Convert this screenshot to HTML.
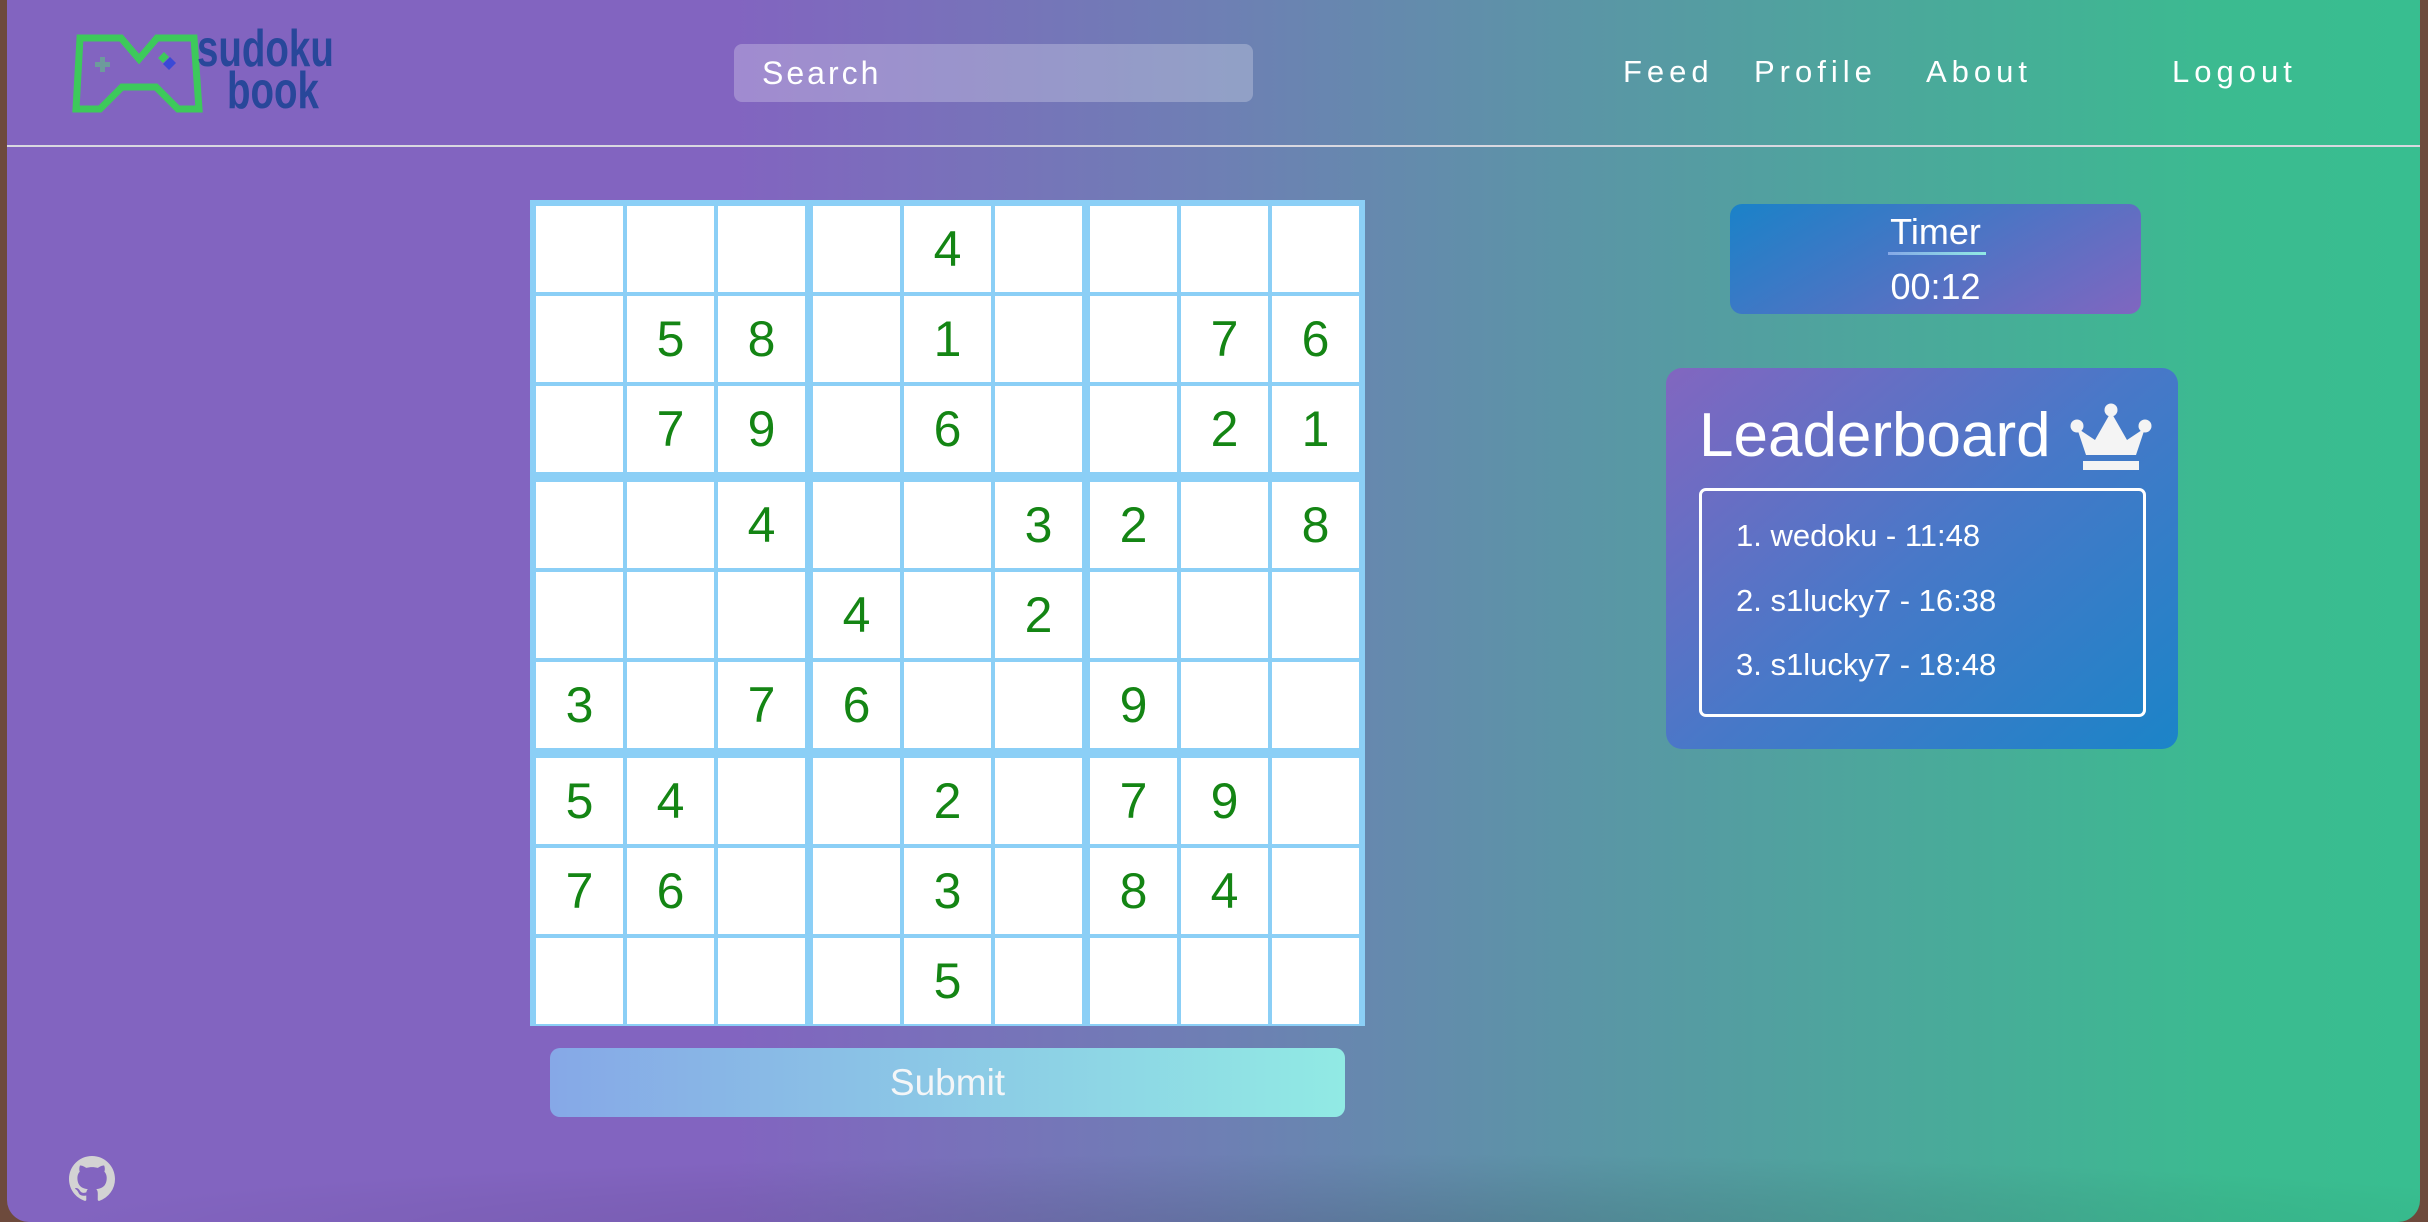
<!DOCTYPE html>
<html><head><meta charset="utf-8"><style>
html,body{margin:0;padding:0;width:2428px;height:1222px;overflow:hidden;background:#6d4a3c;font-family:"Liberation Sans",sans-serif}
#page{position:absolute;left:7px;top:0;width:2413px;height:1222px;border-radius:0 0 22px 22px;overflow:hidden;background:linear-gradient(90deg,#8264c0 0%,#8264c0 30%,#6e7fb4 50%,#5b95a6 65%,#3bbb90 92%,#38be90 100%)}
#shade{position:absolute;left:0;right:0;bottom:0;height:70px;background:radial-gradient(ellipse at 55% 110%,rgba(0,0,0,0.12),rgba(0,0,0,0) 70%)}
#hline{position:absolute;left:0;top:145px;width:100%;height:2px;background:#d8d8e0}
#search{position:absolute;left:727px;top:44px;width:519px;height:58px;border-radius:8px;background:rgba(255,255,255,0.25);color:#fff;font-size:32px;letter-spacing:3px;line-height:58px;padding-left:28px;box-sizing:border-box;font-weight:300}
.nav{position:absolute;top:52px;color:#fff;font-size:31px;letter-spacing:5px;line-height:40px}
#grid{position:absolute;left:523px;top:200px;width:835px;height:826px;background:#8bcff6;padding:6px;box-sizing:border-box;display:grid;grid-template-columns:87px 87px 91px 87px 87px 91px 87px 87px 87px;grid-template-rows:86px 86px 92px 86px 86px 92px 86px 86px 86px;column-gap:4px;row-gap:4px}
.c{background:#fff;width:87px;height:86px;color:#148514;font-size:50px;text-align:center;line-height:86px}
#submit{position:absolute;left:543px;top:1048px;width:795px;height:69px;border-radius:10px;background:linear-gradient(90deg,#86a8e7,#91eae4);color:#f4f6f8;font-size:37px;text-align:center;line-height:69px}
#timer{position:absolute;left:1723px;top:204px;width:411px;height:110px;border-radius:12px;background:linear-gradient(150deg,#1a82c8,#8066c0);color:#fff;text-align:center;font-size:36px}
#lb{position:absolute;left:1659px;top:368px;width:512px;height:381px;border-radius:16px;background:linear-gradient(140deg,#8266c0,#4878c8 50%,#1b84c8)}
#inner{position:absolute;left:33px;top:120px;width:447px;height:229px;border:3px solid #fff;border-radius:7px;box-sizing:border-box}
.e{position:absolute;left:34px;color:#fff;font-size:31px}
.logo{position:absolute;color:#28479a;font-family:'Liberation Sans Narrow','Liberation Sans',sans-serif;font-weight:bold;font-size:52px;line-height:46px;transform:scaleX(0.74);transform-origin:left}
</style></head><body>
<div id="page">
<svg style="position:absolute;left:0;top:0" width="340" height="130">
<path d="M73,38 L114,38 L132,59 L150,38 L187,38 L192,109 L171,109 L149,87 L115,87 L93,109 L69,109 Z" fill="none" stroke="#3dc95b" stroke-width="7" stroke-linejoin="miter"/>
<path d="M93,57 h5 v5 h5 v5 h-5 v5 h-5 v-5 h-5 v-5 h5z" fill="#6d9b9c"/>
<path d="M151,58 l6,-6 l5,5 l-6,6z" fill="#3dc95b"/>
<path d="M156,64 l7,-7 l6,6 l-7,7z" fill="#3b49d6"/>
</svg>
<div class="logo" style="left:190px;top:26px">sudoku</div>
<div class="logo" style="left:220px;top:68px">book</div>
<div id="search">Search</div>
<div class="nav" style="left:1616px">Feed</div>
<div class="nav" style="left:1747px">Profile</div>
<div class="nav" style="left:1919px">About</div>
<div class="nav" style="left:2165px">Logout</div>
<div id="hline"></div>
<div id="grid">
<div class="c"></div><div class="c"></div><div class="c"></div><div class="c"></div><div class="c">4</div><div class="c"></div><div class="c"></div><div class="c"></div><div class="c"></div>
<div class="c"></div><div class="c">5</div><div class="c">8</div><div class="c"></div><div class="c">1</div><div class="c"></div><div class="c"></div><div class="c">7</div><div class="c">6</div>
<div class="c"></div><div class="c">7</div><div class="c">9</div><div class="c"></div><div class="c">6</div><div class="c"></div><div class="c"></div><div class="c">2</div><div class="c">1</div>
<div class="c"></div><div class="c"></div><div class="c">4</div><div class="c"></div><div class="c"></div><div class="c">3</div><div class="c">2</div><div class="c"></div><div class="c">8</div>
<div class="c"></div><div class="c"></div><div class="c"></div><div class="c">4</div><div class="c"></div><div class="c">2</div><div class="c"></div><div class="c"></div><div class="c"></div>
<div class="c">3</div><div class="c"></div><div class="c">7</div><div class="c">6</div><div class="c"></div><div class="c"></div><div class="c">9</div><div class="c"></div><div class="c"></div>
<div class="c">5</div><div class="c">4</div><div class="c"></div><div class="c"></div><div class="c">2</div><div class="c"></div><div class="c">7</div><div class="c">9</div><div class="c"></div>
<div class="c">7</div><div class="c">6</div><div class="c"></div><div class="c"></div><div class="c">3</div><div class="c"></div><div class="c">8</div><div class="c">4</div><div class="c"></div>
<div class="c"></div><div class="c"></div><div class="c"></div><div class="c"></div><div class="c">5</div><div class="c"></div><div class="c"></div><div class="c"></div><div class="c"></div>
</div>
<div id="submit">Submit</div>
<div id="timer">
<div style="position:absolute;left:0;right:0;top:8px;line-height:40px">Timer</div>
<div style="position:absolute;left:158px;top:48px;width:98px;height:3px;background:linear-gradient(90deg,#86a8e7,#91eae4)"></div>
<div style="position:absolute;left:0;right:0;top:61px;line-height:44px">00:12</div>
</div>
<div id="lb">
<div style="position:absolute;left:33px;top:30px;color:#fff;font-size:62px;line-height:76px">Leaderboard</div>
<svg style="position:absolute;left:398px;top:20px" width="90" height="85" viewBox="0 0 90 85">
<circle cx="47" cy="22" r="6.5" fill="#f4f4f4"/><circle cx="13" cy="38" r="6.5" fill="#f4f4f4"/><circle cx="81" cy="38" r="6.5" fill="#f4f4f4"/>
<path d="M13,40 L31,52 L47,24 L63,52 L81,40 L72,67 L22,67 Z" fill="#f4f4f4"/>
<rect x="19" y="73" width="56" height="9" fill="#f4f4f4"/>
</svg>
<div id="inner">
<div class="e" style="top:27px">1. wedoku - 11:48</div>
<div class="e" style="top:92px">2. s1lucky7 - 16:38</div>
<div class="e" style="top:156px">3. s1lucky7 - 18:48</div>
</div>
</div>
<svg style="position:absolute;left:62px;top:1156px" width="46" height="46" viewBox="0 0 16 16"><path fill="#d3d3d3" d="M8 0C3.58 0 0 3.58 0 8c0 3.54 2.29 6.53 5.47 7.59.4.07.55-.17.55-.38 0-.19-.01-.82-.01-1.49-2.01.37-2.53-.49-2.69-.94-.09-.23-.48-.94-.82-1.13-.28-.15-.68-.52-.01-.53.63-.01 1.08.58 1.23.82.72 1.21 1.87.87 2.33.66.07-.52.28-.87.51-1.07-1.78-.2-3.64-.89-3.64-3.95 0-.87.31-1.59.82-2.15-.08-.2-.36-1.02.08-2.12 0 0 .67-.21 2.2.82.64-.18 1.32-.27 2-.27.68 0 1.36.09 2 .27 1.53-1.04 2.2-.82 2.2-.82.44 1.1.16 1.92.08 2.12.51.56.82 1.27.82 2.15 0 3.07-1.87 3.75-3.65 3.95.29.25.54.73.54 1.48 0 1.07-.01 1.93-.01 2.2 0 .21.15.46.55.38A8.013 8.013 0 0016 8c0-4.42-3.58-8-8-8z"/></svg>
<div id="shade"></div>
</div>
</body></html>
